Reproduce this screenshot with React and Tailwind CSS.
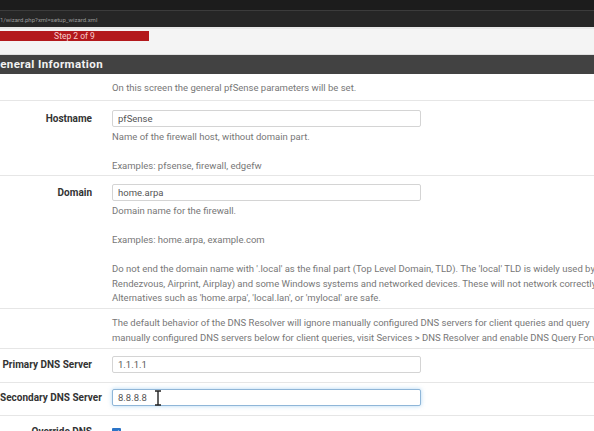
const FONT = { fontFamily: 'Roboto, "Liberation Sans", sans-serif' }

function Row({ label, children, className = '' }) {
  return (
    <div className={`flex border-b border-[#e6e6e6] ${className}`}>
      <div className="w-[100px] shrink-0 pr-2 text-right text-[10px] font-bold text-[#333] whitespace-nowrap leading-[17px]">
        {label}
      </div>
      <div className="pl-3 flex-1 min-w-0">{children}</div>
    </div>
  )
}

function Input({ value, focused }) {
  return (
    <div className={`relative w-[309px] h-[17px] rounded-[2px] border bg-white pl-[5px] text-[9.5px] leading-[15px] text-[#555] ${
      focused ? 'border-[#8fb6d8] shadow-[0_0_4px_rgba(102,175,233,0.5)]' : 'border-[#d4d4d4]'
    }`}>
      {value}
      {focused && (
        <svg className="absolute left-[41px] top-[0px]" width="8" height="16" viewBox="0 0 8 16">
          <path d="M1 1h6M4 1v14M1 15h6" stroke="#222" strokeWidth="1.4" fill="none" />
        </svg>
      )}
    </div>
  )
}

function Help({ lines }) {
  return (
    <div className="text-[9.5px] leading-[14.5px] text-[#777] whitespace-nowrap">
      {lines.map((l, i) => <div key={i} className="h-[14.5px]">{l}</div>)}
    </div>
  )
}

export default function App() {
  return (
    <div className="w-[594px] h-[431px] overflow-hidden bg-white" style={FONT}>
      {/* browser chrome */}
      <div className="h-[10px] bg-[#1c1c1c]" />
      <div className="h-[1px] bg-[#3c3c3c]" />
      <div className="h-[16px] bg-[#262626] flex items-center">
        <span className="text-[6px] text-[#9a9a9a] whitespace-nowrap">1/wizard.php?xml=setup_wizard.xml</span>
      </div>

      {/* progress */}
      <div className="h-[28px] bg-[#f4f4f4] border-t-2 border-[#e8e8e8] pt-[2px] border-b border-b-[#e0e0e0]">
        <div className="w-[149px] h-[10px] bg-[#b3191c] flex items-center justify-center">
          <span className="text-[8.5px] leading-none text-[#f7cccc]">Step 2 of 9</span>
        </div>
      </div>

      {/* panel header */}
      <div className="h-[19px] bg-[#424242] flex items-center overflow-hidden">
        <span className="ml-[-8px] text-[11.5px] font-bold tracking-[0.4px] text-[#f2f2f2] whitespace-nowrap">General Information</span>
      </div>

      <Row label="" className="h-[27px] pt-[7px]">
        <Help lines={['On this screen the general pfSense parameters will be set.']} />
      </Row>

      <Row label="Hostname" className="h-[75px] pt-[9px]">
        <Input value="pfSense" />
        <div className="mt-[3px]">
          <Help lines={['Name of the firewall host, without domain part.', '', 'Examples: pfsense, firewall, edgefw']} />
        </div>
      </Row>

      <Row label="Domain" className="h-[133px] pt-[8px]">
        <Input value="home.arpa" />
        <div className="mt-[3px]">
          <Help lines={[
            'Domain name for the firewall.',
            '',
            'Examples: home.arpa, example.com',
            '',
            "Do not end the domain name with '.local' as the final part (Top Level Domain, TLD). The 'local' TLD is widely used by",
            'Rendezvous, Airprint, Airplay) and some Windows systems and networked devices. These will not network correctly',
            "Alternatives such as 'home.arpa', 'local.lan', or 'mylocal' are safe.",
          ]} />
        </div>
      </Row>

      <Row label="" className="h-[40px] pt-[7px]">
        <Help lines={[
          'The default behavior of the DNS Resolver will ignore manually configured DNS servers for client queries and query',
          'manually configured DNS servers below for client queries, visit Services > DNS Resolver and enable DNS Query Forwarding',
        ]} />
      </Row>

      <Row label="Primary DNS Server" className="h-[34px] pt-[7px]">
        <Input value="1.1.1.1" />
      </Row>

      <Row label="Secondary DNS Server" className="h-[33px] pt-[6px]">
        <Input value="8.8.8.8" focused />
      </Row>

      <div className="flex pt-[7px]">
        <div className="w-[100px] shrink-0 pr-2 text-right text-[10px] font-bold text-[#333] leading-[17px]">Override DNS</div>
        <div className="pl-3 pt-[5px]">
          <div className="w-[9px] h-[9px] rounded-[1px] bg-[#2b74c7] flex items-center justify-center">
            <svg width="7" height="7" viewBox="0 0 8 8">
              <path d="M1.5 4.2l1.8 1.8L6.6 2" stroke="#fff" strokeWidth="1.5" fill="none" />
            </svg>
          </div>
        </div>
      </div>
    </div>
  )
}
